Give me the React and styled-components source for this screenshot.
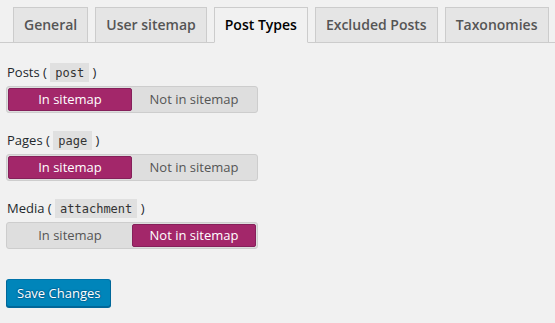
import React, { useState } from 'react'
import styled, { createGlobalStyle } from 'styled-components'

const GlobalStyle = createGlobalStyle`
  html, body {
    margin: 0;
    padding: 0;
    background: #f1f1f1;
  }
  body {
    font-family: "Open Sans", "Liberation Sans", sans-serif;
    font-size: 13px;
    color: #444;
  }
`

const Page = styled.div`
  width: 555px;
  height: 323px;
  overflow: hidden;
  background: #f1f1f1;
`

const TabBar = styled.div`
  display: flex;
  padding: 7px 0 0 6px;
  border-bottom: 1px solid #ccc;
`

const Tab = styled.div`
  margin-left: 7px;
  margin-bottom: -1px;
  padding: 5px 10px;
  line-height: 24px;
  font-size: 14px;
  font-weight: 600;
  white-space: nowrap;
  border: 1px solid #ccc;
  border-bottom-color: ${p => (p.$active ? '#f1f1f1' : '#ccc')};
  background: ${p => (p.$active ? '#f1f1f1' : '#e5e5e5')};
  color: ${p => (p.$active ? '#000' : '#555')};
  cursor: pointer;
`

const Content = styled.div`
  display: flex;
  flex-direction: column;
  align-items: flex-start;
  padding: 19px 0 0 6px;
`

const Field = styled.div`
  display: flex;
  flex-direction: column;
  align-items: flex-start;
  gap: 4px;
  margin-bottom: 17px;
`

const Label = styled.div`
  height: 20px;
  line-height: 20px;
  padding-left: 1px;
  color: #23282d;
`

const Code = styled.code`
  font-family: "DejaVu Sans Mono", "Liberation Mono", monospace;
  font-size: 12px;
  padding: 3px 5px 2px;
  background: rgba(0, 0, 0, 0.07);
  color: #333;
`

const Group = styled.div`
  display: inline-flex;
  padding: 1px;
  border: 1px solid #cdcdcd;
  border-radius: 3px;
  background: #dedede;
`

const Segment = styled.div`
  width: 122px;
  height: 21px;
  line-height: 21px;
  text-align: center;
  border: 1px solid ${p => (p.$on ? '#85205a' : 'transparent')};
  border-radius: 2px;
  background: ${p => (p.$on ? '#a3276a' : 'transparent')};
  color: ${p => (p.$on ? '#fff' : '#555')};
  cursor: pointer;
`

const SaveButton = styled.button`
  margin-top: 13px;
  height: 28px;
  padding: 0 10px 1px;
  font-family: "Open Sans", "Liberation Sans", sans-serif;
  font-size: 13px;
  line-height: 26px;
  color: #fff;
  background: #0085ba;
  border: 1px solid;
  border-color: #0073aa #006799 #006799;
  border-radius: 3px;
  box-shadow: 0 1px 0 #006799;
  text-shadow: 0 -1px 1px #006799, 1px 0 1px #006799, 0 1px 1px #006799, -1px 0 1px #006799;
  cursor: pointer;
`

const tabs = ['General', 'User sitemap', 'Post Types', 'Excluded Posts', 'Taxonomies']

const initial = [
  { name: 'Posts', slug: 'post', on: true },
  { name: 'Pages', slug: 'page', on: true },
  { name: 'Media', slug: 'attachment', on: false },
]

export default function App() {
  const [active, setActive] = useState('Post Types')
  const [types, setTypes] = useState(initial)

  const toggle = (slug, on) =>
    setTypes(list => list.map(t => (t.slug === slug ? { ...t, on } : t)))

  return (
    <Page>
      <GlobalStyle />
      <TabBar>
        {tabs.map(t => (
          <Tab key={t} $active={t === active} onClick={() => setActive(t)}>
            {t}
          </Tab>
        ))}
      </TabBar>
      <Content>
        {types.map(t => (
          <Field key={t.slug}>
            <Label>
              {t.name} ( <Code>{t.slug}</Code> )
            </Label>
            <Group>
              <Segment $on={t.on} onClick={() => toggle(t.slug, true)}>
                In sitemap
              </Segment>
              <Segment $on={!t.on} onClick={() => toggle(t.slug, false)}>
                Not in sitemap
              </Segment>
            </Group>
          </Field>
        ))}
        <SaveButton>Save Changes</SaveButton>
      </Content>
    </Page>
  )
}
